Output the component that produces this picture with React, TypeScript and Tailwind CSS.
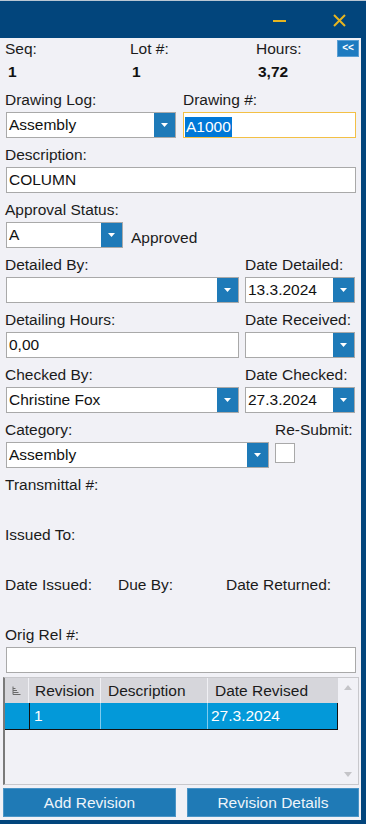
import React from "react";

const FONT = "font-['Liberation_Sans',Arial,sans-serif]";

function Arrow() {
  return (
    <svg width="7" height="4" viewBox="0 0 7 4">
      <path d="M0 0 L7 0 L3.5 4 Z" fill="#ffffff" />
    </svg>
  );
}

function Label({ children, className = "" }: { children: React.ReactNode; className?: string }) {
  return <div className={`h-[18px] leading-[18px] text-[15.5px] text-[#1b1b1b] whitespace-nowrap ${className}`}>{children}</div>;
}

function Combo({ value, className }: { value?: string; className: string }) {
  return (
    <div className={`h-[26px] border border-[#a9a9a9] bg-white flex ${className}`}>
      <div className="flex-1 pl-[2px] leading-[24px] text-[15.5px] text-[#111] whitespace-nowrap overflow-hidden">{value}</div>
      <div className="w-[21px] bg-[#1e7ab8] flex items-center justify-center">
        <Arrow />
      </div>
    </div>
  );
}

function TextBox({ value, className }: { value?: string; className: string }) {
  return (
    <div className={`h-[26px] border border-[#a9a9a9] bg-white pl-[2px] leading-[24px] text-[15.5px] text-[#111] ${className}`}>
      {value}
    </div>
  );
}

export default function App() {
  return (
    <div className={`w-[366px] h-[824px] bg-[#02457c] flex flex-col ${FONT}`}>
      {/* Title bar */}
      <div className="h-[38px] border-t border-[#b9c6d3] relative flex items-center justify-end">
        <div className="flex items-center gap-[47px] mr-[20px] mt-[2px]">
          <div className="w-[13px] h-[2px] bg-[#e6b520]" />
          <svg width="13" height="13" viewBox="0 0 13 13">
            <path d="M1 1 L12 12 M12 1 L1 12" stroke="#e6b520" strokeWidth="2" />
          </svg>
        </div>
      </div>

      <div className="flex h-[782px]">
        <div className="w-[361px] bg-[#f1f1f6] flex flex-col">
          {/* Seq / Lot / Hours */}
          <div className="mt-[2px] flex h-[18px]">
            <Label className="ml-[5px] w-[125px]">Seq:</Label>
            <Label className="w-[126px]">Lot #:</Label>
            <Label className="w-[81px]">Hours:</Label>
            <div className="w-[22px] h-[17px] bg-[#1e7bc0] border border-[#5a9fd4] text-white text-[10px] font-bold leading-[14px] text-center">&lt;&lt;</div>
          </div>
          <div className="mt-[5px] flex h-[18px] font-bold text-[15.5px] leading-[18px] text-[#111]">
            <div className="ml-[8px] w-[124px]">1</div>
            <div className="w-[126px]">1</div>
            <div>3,72</div>
          </div>

          {/* Drawing Log / Drawing # */}
          <div className="mt-[10px] flex">
            <div className="ml-[6px] w-[170px]">
              <Label className="-ml-[1px]">Drawing Log:</Label>
              <Combo value="Assembly" className="mt-[3px] w-[170px]" />
            </div>
            <div className="ml-[7px] w-[173px]">
              <Label>Drawing #:</Label>
              <div className="mt-[3px] h-[26px] w-[173px] border-[1.5px] border-[#f3c046] bg-white pl-[1px] pt-[2px]">
                <span className="inline-block bg-[#0078d7] text-white text-[15.5px] leading-[20px] px-[1px]">A1000</span>
              </div>
            </div>
          </div>

          {/* Description */}
          <div className="mt-[8px] ml-[5px]">
            <Label>Description:</Label>
            <TextBox value="COLUMN" className="mt-[3px] ml-[1px] w-[350px]" />
          </div>

          {/* Approval Status */}
          <div className="mt-[8px] ml-[5px]">
            <Label>Approval Status:</Label>
            <div className="mt-[3px] flex items-center">
              <Combo value="A" className="ml-[1px] w-[117px]" />
              <div className="ml-[8px] mt-[6px] text-[15.5px] leading-[18px] text-[#1b1b1b]">Approved</div>
            </div>
          </div>

          {/* Detailed By / Date Detailed */}
          <div className="mt-[8px] flex">
            <div className="ml-[5px] w-[234px]">
              <Label>Detailed By:</Label>
              <Combo className="mt-[3px] ml-[1px] w-[233px]" />
            </div>
            <div className="ml-[6px]">
              <Label>Date Detailed:</Label>
              <Combo value="13.3.2024" className="mt-[3px] w-[110px]" />
            </div>
          </div>

          {/* Detailing Hours / Date Received */}
          <div className="mt-[8px] flex">
            <div className="ml-[5px] w-[234px]">
              <Label>Detailing Hours:</Label>
              <TextBox value="0,00" className="mt-[3px] ml-[1px] w-[233px]" />
            </div>
            <div className="ml-[6px]">
              <Label>Date Received:</Label>
              <Combo className="mt-[3px] w-[110px]" />
            </div>
          </div>

          {/* Checked By / Date Checked */}
          <div className="mt-[8px] flex">
            <div className="ml-[5px] w-[234px]">
              <Label>Checked By:</Label>
              <Combo value="Christine Fox" className="mt-[3px] ml-[1px] w-[233px]" />
            </div>
            <div className="ml-[6px]">
              <Label>Date Checked:</Label>
              <Combo value="27.3.2024" className="mt-[3px] w-[110px]" />
            </div>
          </div>

          {/* Category / Re-Submit */}
          <div className="mt-[8px] flex">
            <div className="ml-[5px] w-[269px]">
              <Label>Category:</Label>
              <Combo value="Assembly" className="mt-[3px] ml-[1px] w-[263px]" />
            </div>
            <div className="ml-[1px]">
              <Label>Re-Submit:</Label>
              <div className="mt-[4px] w-[20px] h-[20px] border border-[#a9a9a9] bg-white" />
            </div>
          </div>

          {/* Transmittal etc */}
          <Label className="mt-[8px] ml-[5px]">Transmittal #:</Label>
          <Label className="mt-[32px] ml-[5px]">Issued To:</Label>
          <div className="mt-[32px] flex">
            <Label className="ml-[5px] w-[113px]">Date Issued:</Label>
            <Label className="w-[108px]">Due By:</Label>
            <Label>Date Returned:</Label>
          </div>
          <div className="mt-[32px] ml-[5px]">
            <Label>Orig Rel #:</Label>
            <TextBox className="mt-[3px] ml-[1px] w-[350px]" />
          </div>

          {/* Grid */}
          <div className="mt-[4px] ml-[3px] w-[356px] h-[108px] border border-[#c8c8cc] border-l-[#7a7a7a] border-l-[2px] flex">
            <div className="w-[333px] flex flex-col">
              <div className="h-[25px] bg-[#d6d6db] flex text-[15.5px] leading-[25px] text-[#1b1b1b]">
                <div className="w-[24px] flex items-center justify-center border-r border-[#f0f0f4]">
                  <svg width="9" height="9" viewBox="0 0 9 9">
                    <path d="M1 0.5 V8.5 M1 2.5 H3.5 M1 4.5 H5 M1 6.5 H6.5 M1 8.5 H8.5" stroke="#6a6a6a" strokeWidth="1" />
                  </svg>
                </div>
                <div className="w-[72px] pl-[6px] border-r border-[#f0f0f4]">Revision</div>
                <div className="w-[107px] pl-[7px] border-r border-[#f0f0f4]">Description</div>
                <div className="flex-1 pl-[7px]">Date Revised</div>
              </div>
              <div className="h-[27px] bg-[#0399d9] flex border-b border-[#111] text-[15.5px] leading-[25px] text-white">
                <div className="w-[24px]" />
                <div className="flex-1 flex border-l border-r border-[#111]">
                  <div className="w-[71px] pl-[4px] border-r border-[#7fcbee]">1</div>
                  <div className="w-[107px] border-r border-[#7fcbee]" />
                  <div className="flex-1 pl-[3px]">27.3.2024</div>
                </div>
              </div>
            </div>
            <div className="flex-1 flex flex-col items-center justify-between py-[7px]">
              <svg width="8" height="5" viewBox="0 0 8 5">
                <path d="M0 5 L8 5 L4 0 Z" fill="#c4c4c8" />
              </svg>
              <svg width="8" height="5" viewBox="0 0 8 5">
                <path d="M0 0 L8 0 L4 5 Z" fill="#c4c4c8" />
              </svg>
            </div>
          </div>

          {/* Buttons */}
          <div className="mt-[3px] flex">
            <div className="ml-[3px] w-[173px] h-[29px] bg-[#1f7ab6] border border-[#4a94c6] text-[#eef4fa] text-[15.5px] leading-[27px] text-center">Add Revision</div>
            <div className="ml-[11px] w-[172px] h-[29px] bg-[#1f7ab6] border border-[#4a94c6] text-[#eef4fa] text-[15.5px] leading-[27px] text-center">Revision Details</div>
          </div>
        </div>
        <div className="flex-1 bg-[#02457c]" />
      </div>
    </div>
  );
}
